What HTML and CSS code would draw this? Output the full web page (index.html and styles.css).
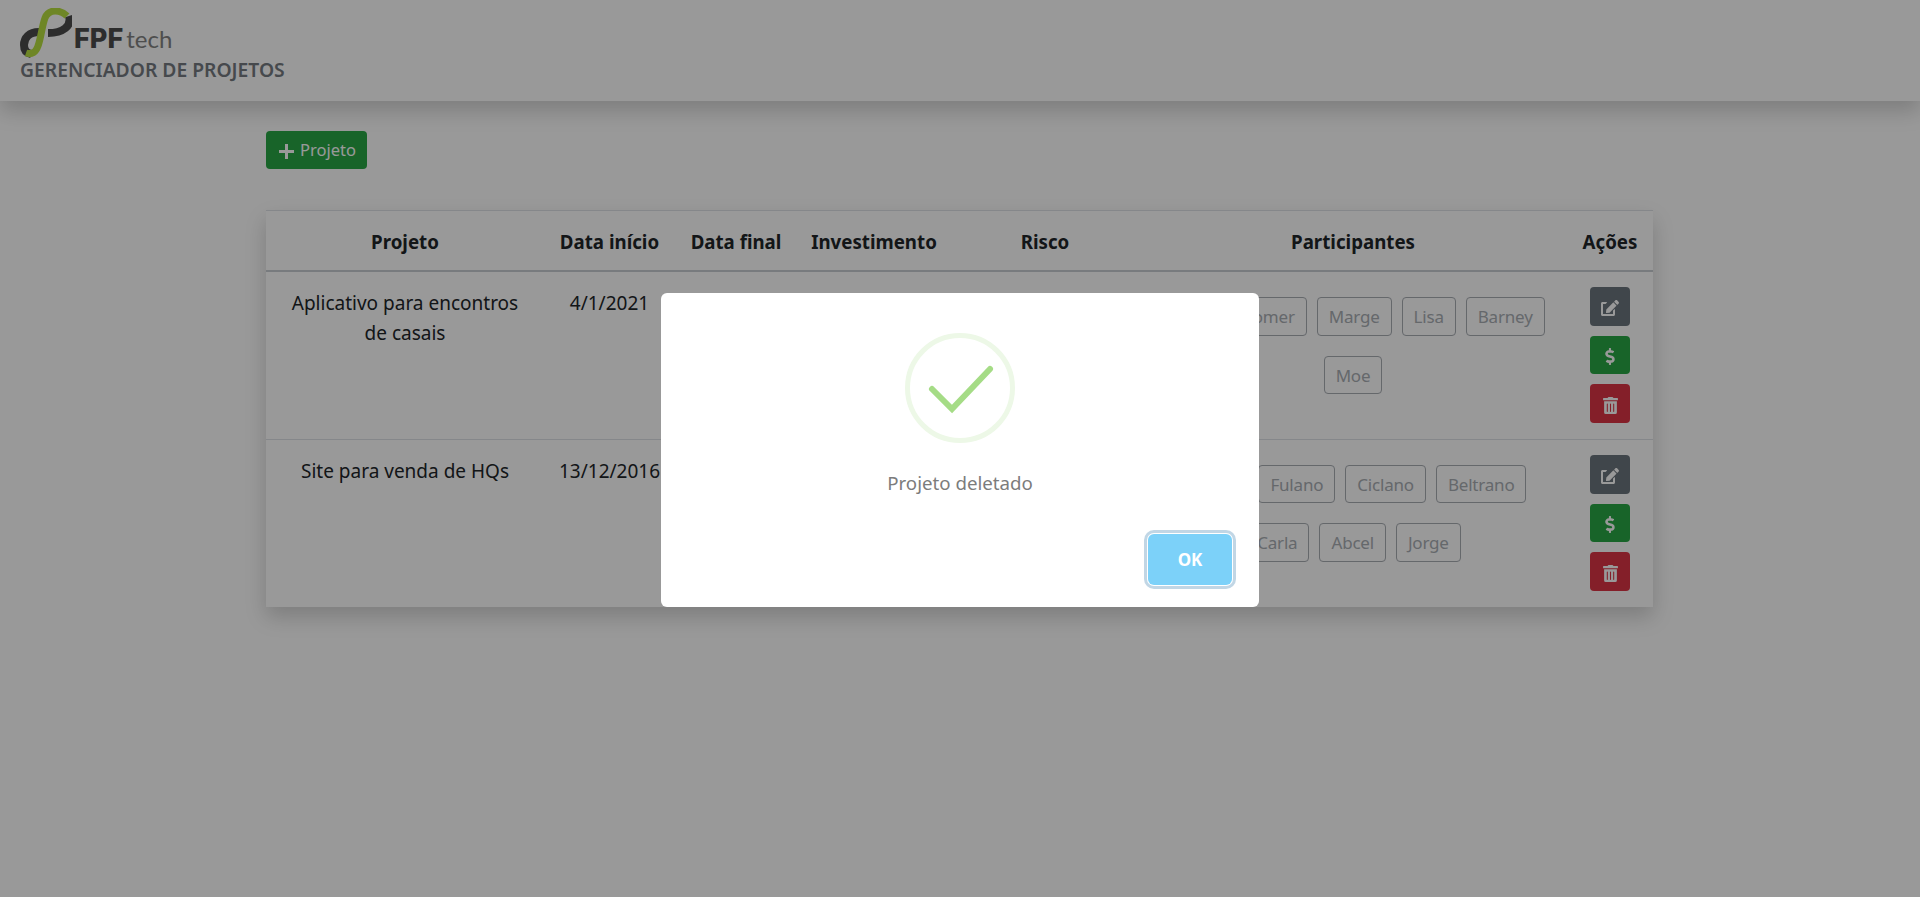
FILE: index.html
```html
<!DOCTYPE html>
<html lang="pt-BR">
<head>
    <meta charset="UTF-8">
    <meta name="viewport" content="width=device-width, initial-scale=1.0">
    <title>Gerenciador de Projetos</title>
    <link rel="stylesheet" href="styles.css">
</head>
<body>
    <header class="navbar">
        <div class="logo">
            <svg class="logo-mark" viewBox="0 0 52 50" width="52" height="50" aria-hidden="true">
                <path class="logo-dark" d="M49 8 C52 18 43 25 28 25"/>
                <path class="logo-dark" d="M19 24 C9 24 4 30 4 37 C4 42 6 45 11 46"/>
                <path class="logo-green" d="M47 8 C41 2 29 0 25 10 C22 18 21 30 18 38 C16 44 12 47 6 45"/>
            </svg>
            <span class="logo-fpf">FPF</span><span class="logo-tech">tech</span>
        </div>
        <div class="app-title">GERENCIADOR DE PROJETOS</div>
    </header>

    <main class="container">
        <button class="btn-novo">
            <svg class="plus" viewBox="0 0 15 15" width="15" height="15" aria-hidden="true"><path d="M6 0h3v6h6v3H9v6H6V9H0V6h6z"/></svg>
            Projeto
        </button>

        <div class="card">
            <table class="tabela">
                <thead>
                    <tr>
                        <th class="col-projeto">Projeto</th>
                        <th class="col-inicio">Data início</th>
                        <th class="col-final">Data final</th>
                        <th class="col-invest">Investimento</th>
                        <th class="col-risco">Risco</th>
                        <th class="col-part">Participantes</th>
                        <th class="col-acoes">Ações</th>
                    </tr>
                </thead>
                <tbody>
                    <tr>
                        <td class="texto">Aplicativo para encontros de casais</td>
                        <td class="texto">4/1/2021</td>
                        <td></td>
                        <td></td>
                        <td></td>
                        <td>
                            <div class="tags">
                                <span class="tag">Bart</span>
                                <span class="tag">Homer</span>
                                <span class="tag">Marge</span>
                                <span class="tag">Lisa</span>
                                <span class="tag">Barney</span>
                                <span class="tag">Moe</span>
                            </div>
                        </td>
                        <td>
                            <div class="acoes">
                                <button class="btn-acao editar"><svg viewBox="0 0 576 512" width="18" height="16"><path d="M402.600 83.200l90.200 90.200c3.800 3.800 3.800 10 0 13.800L274.400 405.600l-92.800 10.300c-12.400 1.400-22.900-9.100-21.500-21.500l10.300-92.800L388.800 83.200c3.800-3.800 10-3.800 13.800 0zm162-22.900l-48.800-48.800c-15.200-15.200-39.900-15.200-55.200 0l-35.400 35.400c-3.800 3.800-3.800 10 0 13.800l90.200 90.200c3.800 3.800 10 3.800 13.800 0l35.400-35.400c15.200-15.300 15.200-40 0-55.200zM384 346.200V448H64V128h73.200c3.200 0 6.200-1.300 8.500-3.500l40-40c7.600-7.600 2.200-20.500-8.500-20.500H48C21.500 64 0 85.500 0 112v352c0 26.500 21.500 48 48 48h352c26.500 0 48-21.500 48-48V306.200c0-10.700-12.900-16-20.500-8.500l-40 40c-2.200 2.300-3.500 5.300-3.500 8.500z"/></svg></button>
                                <button class="btn-acao custo"><svg viewBox="0 0 320 512" width="11" height="17"><path d="M209.200 233.400l-108-31.600C88.700 198.200 80 186.500 80 173.500c0-16.300 13.200-29.500 29.500-29.500h66.300c12.200 0 24.200 3.700 34.200 10.500 6.100 4.100 14.300 3.100 19.500-2l34.800-34c7.100-6.900 6.100-18.400-1.800-24.500C238 74.800 207.400 64.100 176 64V16c0-8.800-7.200-16-16-16h-32c-8.800 0-16 7.200-16 16v48h-2.500C45.800 64-5.400 118.700.5 183.600c4.200 46.100 39.400 83.600 83.800 96.600l102.500 30c12.500 3.700 21.200 15.300 21.200 28.300 0 16.300-13.200 29.500-29.500 29.500h-66.300C100 368 88 364.300 78 357.500c-6.100-4.100-14.300-3.100-19.500 2l-34.800 34c-7.100 6.900-6.100 18.400 1.800 24.500 24.500 19.200 55.100 29.900 86.500 30v48c0 8.800 7.200 16 16 16h32c8.800 0 16-7.200 16-16v-48.200c46.600-.9 90.300-28.600 105.700-72.700 21.500-61.600-14.600-124.800-72.500-141.700z"/></svg></button>
                                <button class="btn-acao excluir"><svg viewBox="0 0 448 512" width="15" height="17"><path d="M32 464a48 48 0 0 0 48 48h288a48 48 0 0 0 48-48V128H32zm272-256a16 16 0 0 1 32 0v224a16 16 0 0 1-32 0zm-96 0a16 16 0 0 1 32 0v224a16 16 0 0 1-32 0zm-96 0a16 16 0 0 1 32 0v224a16 16 0 0 1-32 0zM432 32H312l-9.400-18.700A24 24 0 0 0 281.100 0H166.800a23.720 23.720 0 0 0-21.400 13.300L136 32H16A16 16 0 0 0 0 48v32a16 16 0 0 0 16 16h416a16 16 0 0 0 16-16V48a16 16 0 0 0-16-16z"/></svg></button>
                            </div>
                        </td>
                    </tr>
                    <tr>
                        <td class="texto">Site para venda de HQs</td>
                        <td class="texto">13/12/2016</td>
                        <td></td>
                        <td></td>
                        <td></td>
                        <td>
                            <div class="tags">
                                <span class="tag">Maria</span>
                                <span class="tag">Fulano</span>
                                <span class="tag">Ciclano</span>
                                <span class="tag">Beltrano</span>
                                <span class="tag">Carla</span>
                                <span class="tag">Abcel</span>
                                <span class="tag">Jorge</span>
                            </div>
                        </td>
                        <td>
                            <div class="acoes">
                                <button class="btn-acao editar"><svg viewBox="0 0 576 512" width="18" height="16"><path d="M402.600 83.200l90.200 90.200c3.800 3.800 3.800 10 0 13.800L274.400 405.600l-92.800 10.300c-12.400 1.400-22.900-9.100-21.500-21.500l10.300-92.800L388.800 83.200c3.800-3.800 10-3.800 13.800 0zm162-22.900l-48.800-48.800c-15.200-15.200-39.900-15.200-55.200 0l-35.400 35.400c-3.800 3.800-3.800 10 0 13.800l90.200 90.200c3.800 3.800 10 3.800 13.800 0l35.400-35.400c15.200-15.300 15.200-40 0-55.200zM384 346.200V448H64V128h73.200c3.200 0 6.200-1.300 8.500-3.500l40-40c7.600-7.600 2.200-20.500-8.500-20.500H48C21.500 64 0 85.500 0 112v352c0 26.500 21.500 48 48 48h352c26.500 0 48-21.500 48-48V306.200c0-10.700-12.900-16-20.500-8.500l-40 40c-2.200 2.300-3.500 5.300-3.500 8.500z"/></svg></button>
                                <button class="btn-acao custo"><svg viewBox="0 0 320 512" width="11" height="17"><path d="M209.200 233.400l-108-31.600C88.700 198.200 80 186.500 80 173.500c0-16.300 13.200-29.500 29.500-29.500h66.300c12.200 0 24.200 3.700 34.200 10.500 6.100 4.100 14.300 3.100 19.500-2l34.800-34c7.100-6.900 6.100-18.400-1.800-24.500C238 74.800 207.400 64.100 176 64V16c0-8.800-7.200-16-16-16h-32c-8.800 0-16 7.200-16 16v48h-2.500C45.800 64-5.400 118.700.5 183.600c4.200 46.100 39.400 83.600 83.800 96.600l102.500 30c12.500 3.700 21.200 15.300 21.200 28.300 0 16.300-13.200 29.500-29.500 29.500h-66.300C100 368 88 364.300 78 357.500c-6.100-4.100-14.300-3.100-19.500 2l-34.800 34c-7.100 6.900-6.100 18.400 1.800 24.500 24.500 19.200 55.100 29.900 86.500 30v48c0 8.800 7.200 16 16 16h32c8.800 0 16-7.200 16-16v-48.200c46.600-.9 90.300-28.600 105.700-72.700 21.500-61.600-14.600-124.800-72.500-141.700z"/></svg></button>
                                <button class="btn-acao excluir"><svg viewBox="0 0 448 512" width="15" height="17"><path d="M32 464a48 48 0 0 0 48 48h288a48 48 0 0 0 48-48V128H32zm272-256a16 16 0 0 1 32 0v224a16 16 0 0 1-32 0zm-96 0a16 16 0 0 1 32 0v224a16 16 0 0 1-32 0zm-96 0a16 16 0 0 1 32 0v224a16 16 0 0 1-32 0zM432 32H312l-9.400-18.700A24 24 0 0 0 281.100 0H166.800a23.720 23.720 0 0 0-21.400 13.300L136 32H16A16 16 0 0 0 0 48v32a16 16 0 0 0 16 16h416a16 16 0 0 0 16-16V48a16 16 0 0 0-16-16z"/></svg></button>
                            </div>
                        </td>
                    </tr>
                </tbody>
            </table>
        </div>
    </main>

    <div class="overlay">
        <div class="modal">
            <svg class="modal-icon" viewBox="0 0 110 110" width="110" height="110" aria-hidden="true">
                <circle class="icon-ring" cx="55" cy="55" r="52.500"/>
                <path class="icon-check" d="M27 56 L47 76 L85 36"/>
            </svg>
            <p class="modal-text">Projeto deletado</p>
            <div class="modal-footer">
                <button class="btn-ok">OK</button>
            </div>
        </div>
    </div>
</body>
</html>
```

FILE: styles.css
```css
* {
    box-sizing: border-box;
}
html,
body {
    min-height: 100%;
}
body {
    margin: 0;
    background-color: #fff;
    color: #212529;
    font-family: "Noto Sans", "Open Sans", sans-serif;
    font-size: 19px;
    line-height: 30px;
}
button {
    font-family: inherit;
    cursor: pointer;
}

/* navbar */
.navbar {
    height: 101px;
    padding: 8px 20px 0;
    background: #fff;
    box-shadow: 0 10px 20px rgba(0, 0, 0, 0.18);
}
.logo {
    display: flex;
    align-items: flex-end;
    height: 49px;
}
.logo-mark {
    fill: none;
    margin-right: 2px;
    align-self: flex-start;
}
.logo-dark {
    stroke: #4c4c4c;
    stroke-width: 8;
}
.logo-green {
    stroke: #b8e040;
    stroke-width: 7;
}
.logo-fpf {
    font-family: Inter, sans-serif;
    font-weight: 800;
    font-size: 27px;
    line-height: 36px;
    color: #4c4c4c;
}
.logo-tech {
    font-family: Lato, sans-serif;
    font-size: 24px;
    line-height: 36px;
    color: #828282;
    margin-left: 3px;
}
.app-title {
    font-size: 19.300px;
    font-weight: 600;
    line-height: 26px;
    color: #757b81;
}

/* conteudo */
.container {
    padding: 30px 267px 60px 266px;
}
.btn-novo {
    display: flex;
    align-items: center;
    justify-content: center;
    gap: 6px;
    height: 38px;
    width: 101px;
    padding: 0 0 0 2px;
    border: 0;
    border-radius: 4px;
    background: #28a745;
    color: #fff;
    font-size: 16.500px;
    line-height: 38px;
}
.plus {
    fill: #fff;
    margin-top: 2px;
}
.card {
    margin-top: 41px;
    background: #fff;
    box-shadow: 0 10px 20px rgba(0, 0, 0, 0.18);
}
.tabela {
    width: 100%;
    table-layout: fixed;
    border-collapse: separate;
    border-spacing: 0;
    text-align: center;
}
.tabela th {
    padding: 16px 0 14px;
    border-top: 1px solid #dee2e6;
    border-bottom: 2px solid #c8cdd2;
    font-size: 18.700px;
    font-weight: 700;
    line-height: 29px;
    white-space: nowrap;
}
.tabela td {
    padding: 15px 15px 16px;
    vertical-align: top;
    border-bottom: 1px solid #dee2e6;
}
.tabela td.texto {
    padding-top: 16px;
}
.tabela td:nth-child(2) {
    padding-left: 0;
    padding-right: 0;
}
.tabela tr:last-child td {
    border-bottom: 0;
}
.col-projeto { width: 278px; }
.col-inicio { width: 131px; }
.col-final { width: 122px; }
.col-invest { width: 154px; }
.col-risco { width: 188px; }
.col-part { width: 428px; }
.col-acoes { width: 86px; }
.tags {
    display: flex;
    flex-wrap: wrap;
    justify-content: center;
    column-gap: 10px;
    row-gap: 20px;
    margin: 10px -6px 0;
}
.tag {
    display: block;
    height: 38.500px;
    padding: 0 11px;
    border: 1px solid #a8adb3;
    border-radius: 4px;
    color: #a8adb3;
    font-size: 17px;
    letter-spacing: -0.2px;
    line-height: 37px;
}
.acoes {
    display: flex;
    flex-direction: column;
    align-items: center;
    gap: 10px;
}
.btn-acao {
    display: flex;
    align-items: center;
    justify-content: center;
    width: 40px;
    height: 38.670px;
    padding: 4px 0 0;
    border: 0;
    border-radius: 4px;
}
.btn-acao svg {
    fill: #fff;
}
.editar { background: #6c757d; }
.custo { background: #28a745; }
.excluir { background: #dc3545; }

/* modal de sucesso */
.overlay {
    position: fixed;
    inset: 0;
    display: flex;
    align-items: center;
    justify-content: center;
    padding-top: 3px;
    background: rgba(0, 0, 0, 0.4);
}
.modal {
    width: 598px;
    height: 314px;
    padding-top: 40px;
    background: #fff;
    border-radius: 6px;
    text-align: center;
}
.modal-icon {
    display: block;
    margin: 0 auto;
}
.icon-ring {
    fill: none;
    stroke: #edf8e7;
    stroke-width: 5;
}
.icon-check {
    fill: none;
    stroke: #a5dc86;
    stroke-width: 6;
    stroke-linecap: round;
}
.modal-text {
    margin: 25px 0 0;
    color: #7c7c7c;
    font-size: 18.700px;
}
.modal-footer {
    display: flex;
    justify-content: flex-end;
    padding: 36px 27px 0 0;
}
.btn-ok {
    width: 84px;
    height: 51px;
    border: 0;
    border-radius: 6px;
    background: #7cd1f9;
    color: #fff;
    font-size: 17px;
    font-weight: 700;
    box-shadow: 0 0 0 1px #fff, 0 0 0 4px rgba(43, 114, 165, 0.29);
}
```
